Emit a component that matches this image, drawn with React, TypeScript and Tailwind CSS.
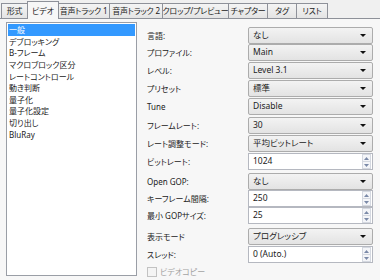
const tabs = [
  { name: "形式", w: "w-[27px]" },
  { name: "ビデオ", w: "w-[32px]", active: true },
  { name: "音声トラック 1", w: "w-[52px]" },
  { name: "音声トラック 2", w: "w-[53px]" },
  { name: "クロップ/プレビュー", w: "w-[66px]" },
  { name: "チャプター", w: "w-[39px]" },
  { name: "タグ", w: "w-[29px]" },
  { name: "リスト", w: "w-[31px]" },
];

const items = [
  "一般",
  "デブロッキング",
  "B-フレーム",
  "マクロブロック区分",
  "レートコントロール",
  "動き判断",
  "量子化",
  "量子化設定",
  "切り出し",
  "BluRay",
];

type Row = { label: string; kind: "combo" | "spin"; value: string; mt: string };

const rows: Row[] = [
  { label: "言語:", kind: "combo", value: "なし", mt: "mt-[8px]" },
  { label: "プロファイル:", kind: "combo", value: "Main", mt: "mt-0" },
  { label: "レベル:", kind: "combo", value: "Level 3.1", mt: "mt-[1px]" },
  { label: "プリセット", kind: "combo", value: "標準", mt: "mt-[1px]" },
  { label: "Tune", kind: "combo", value: "Disable", mt: "mt-[1px]" },
  { label: "フレームレート:", kind: "combo", value: "30", mt: "mt-[2px]" },
  { label: "レート調整モード:", kind: "combo", value: "平均ビットレート", mt: "mt-[1px]" },
  { label: "ビットレート:", kind: "spin", value: "1024", mt: "mt-[1px]" },
  { label: "Open GOP:", kind: "combo", value: "なし", mt: "mt-[3px]" },
  { label: "キーフレーム間隔:", kind: "spin", value: "250", mt: "mt-0" },
  { label: "最小 GOPサイズ:", kind: "spin", value: "25", mt: "mt-0" },
  { label: "表示モード", kind: "combo", value: "プログレッシブ", mt: "mt-[4px]" },
  { label: "スレッド:", kind: "spin", value: "0 (Auto.)", mt: "mt-[1px]" },
];

const Combo = ({ value }: { value: string }) => (
  <div className="flex h-[17px] w-[125px] items-center justify-between rounded-[2px] border border-[#acacac] bg-linear-to-b from-[#f3f3f3] to-[#e3e3e3] pl-[4px] pr-[6px] text-[8.5px]">
    <span>{value}</span>
    <svg width="6" height="3" viewBox="0 0 6 3">
      <path d="M0 0h6L3 3z" fill="#111" />
    </svg>
  </div>
);

const Spin = ({ value }: { value: string }) => (
  <div className="flex h-[17px] w-[125px] items-center justify-between border border-[#b5b8c0] bg-white pl-[4px] text-[8.5px]">
    <span>{value}</span>
    <div className="mr-[1px] flex h-[15px] w-[9px] flex-col">
      <div className="flex flex-1 items-center justify-center border border-[#d4d8e0] bg-[#f4f5f8]">
        <svg width="5" height="3" viewBox="0 0 5 3">
          <path d="M0 3h5L2.5 0z" fill="#7b8aa8" />
        </svg>
      </div>
      <div className="flex flex-1 items-center justify-center border border-t-0 border-[#d4d8e0] bg-[#f4f5f8]">
        <svg width="5" height="3" viewBox="0 0 5 3">
          <path d="M0 0h5L2.5 3z" fill="#7b8aa8" />
        </svg>
      </div>
    </div>
  </div>
);

export default function App() {
  return (
    <div className="h-[280px] w-[380px] overflow-hidden whitespace-nowrap bg-[#f0f0f0] text-[8px] leading-none text-[#222] [font-family:'Noto_Sans','Noto_Sans_CJK_JP',sans-serif] [font-feature-settings:'palt']">
      <div className="flex h-[19px] items-end border-b border-[#8e9199] pl-[1px]">
        {tabs.map((t) =>
          t.active ? (
            <div
              key={t.name}
              className={`${t.w} relative z-10 -mb-px -mx-px flex h-[18px] items-center justify-center border border-b-0 border-[#8e9199] bg-[#f7f7f7]`}
            >
              {t.name}
            </div>
          ) : (
            <div
              key={t.name}
              className={`${t.w} flex h-[15px] items-center justify-center overflow-hidden border border-b-0 border-l-0 border-[#8e9199] bg-linear-to-b from-[#f4f4f4] to-[#e4e4e4] tracking-[-0.2px] first:border-l`}
            >
              {t.name}
            </div>
          )
        )}
      </div>

      <div className="flex h-[261px] bg-[#f7f7f7]">
        <div className="mb-[4px] ml-[6px] mt-[3px] w-[131px] border border-[#9a9ea6] bg-white p-px">
          {items.map((it, i) => (
            <div
              key={it}
              className={
                i === 0
                  ? "flex h-[12px] items-center bg-[#3399ff] pl-[1px] text-white"
                  : "flex h-[11.6px] items-center pl-[1px]"
              }
            >
              {it}
            </div>
          ))}
        </div>

        <div className="ml-[10px] flex flex-col">
          {rows.map((r) => (
            <div key={r.label} className={`${r.mt} flex h-[17px] items-center`}>
              <div className="w-[101px]">{r.label}</div>
              {r.kind === "combo" ? <Combo value={r.value} /> : <Spin value={r.value} />}
            </div>
          ))}
          <div className="mt-[1px] flex h-[17px] items-center gap-[3px] text-[#a3a3a3]">
            <div className="h-[10px] w-[10px] border border-[#c2c2c2] bg-[#f4f4f4]" />
            <span>ビデオコピー</span>
          </div>
        </div>
      </div>
    </div>
  );
}
